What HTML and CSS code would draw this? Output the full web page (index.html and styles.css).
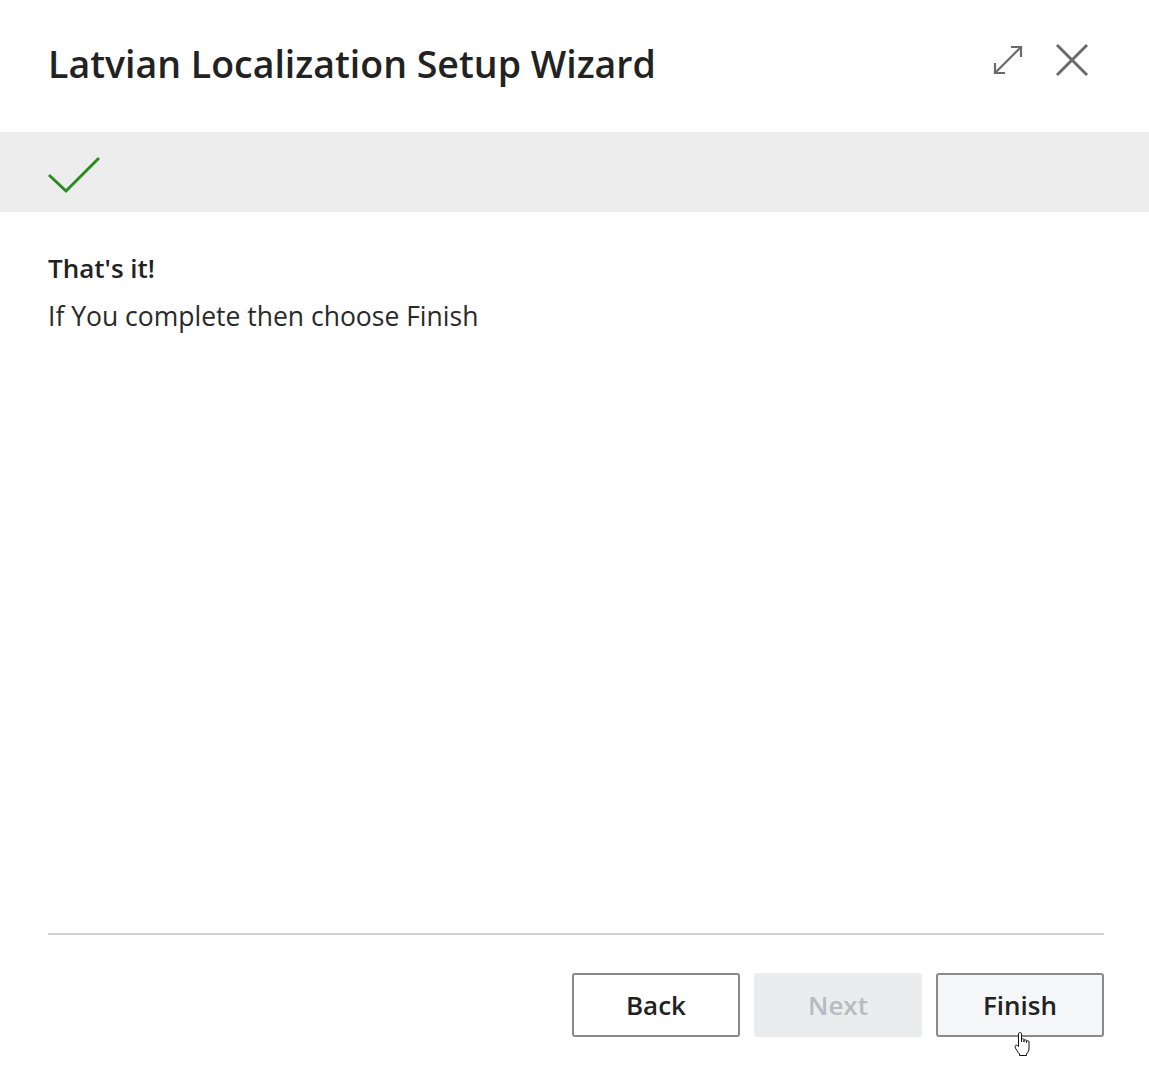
FILE: index.html
```html
<!DOCTYPE html>
<html>
<head>
<meta charset="utf-8">
<link rel="stylesheet" href="styles.css">
</head>
<body>
<div class="dialog">
  <header class="head">
    <h1 class="title">Latvian Localization Setup Wizard</h1>
    <div class="head-actions">
      <svg class="icon-expand" width="30" height="30" viewBox="0 0 30 30">
        <path d="M2 28 L28 2 M18 2 H28 V12 M2 18 V28 H12" fill="none" stroke="#6b6b6b" stroke-width="2.2"/>
      </svg>
      <svg class="icon-close" width="34" height="34" viewBox="0 0 34 34">
        <path d="M2 2 L32 32 M32 2 L2 32" fill="none" stroke="#6b6b6b" stroke-width="3"/>
      </svg>
    </div>
  </header>
  <div class="band">
    <svg class="check" width="52" height="38" viewBox="0 0 52 38">
      <path d="M1 19 L18 35 L51 2" fill="none" stroke="#2b8a1f" stroke-width="3"/>
    </svg>
  </div>
  <main class="content">
    <h2 class="subtitle">That's it!</h2>
    <p class="text">If You complete then choose Finish</p>
  </main>
  <footer class="foot">
    <div class="divider"></div>
    <div class="buttons">
      <button class="btn">Back</button>
      <button class="btn btn-disabled">Next</button>
      <button class="btn btn-hover">Finish
        <svg class="cursor" width="20" height="26" viewBox="0 0 20 26">
          <path d="M6 1.5 C7 1.5 7.5 2 7.5 3 V11 V8.5 C7.5 7.5 10 7.5 10 8.5 V11 V9.5 C10 8.5 12.5 8.5 12.5 9.5 V11.5 V10.5 C12.5 9.5 15 9.5 15 10.5 V17 C15 20 13.5 22 12.5 23 V24.5 H5.5 V23 C4 21.5 1 17 1 15.5 C1 14 2.5 13.5 4.5 15.5 V3 C4.5 2 5 1.5 6 1.5 Z" fill="#fff" stroke="#111" stroke-width="1"/>
        </svg>
      </button>
    </div>
  </footer>
</div>
</body>
</html>
```
FILE: styles.css
```css
* { box-sizing: border-box; }
html, body { margin: 0; padding: 0; background: #fff; }
body {
  font-family: "Open Sans", "Noto Sans", sans-serif;
  color: #212121;
  width: 1149px;
  height: 1082px;
  overflow: hidden;
}
.dialog {
  display: flex;
  flex-direction: column;
  height: 1082px;
}
.head {
  height: 132px;
  display: flex;
  align-items: center;
  justify-content: space-between;
  padding: 0 60px 0 48px;
}
.title {
  margin: 0;
  font-size: 37.5px;
  font-weight: 600;
  color: #222;
  position: relative;
  top: -3px;
}
.head-actions {
  display: flex;
  align-items: center;
  gap: 32px;
  position: relative;
  top: -6px;
}
.band {
  height: 80px;
  background: #ededed;
  display: flex;
  align-items: center;
  padding-left: 48px;
}
.check { display: block; position: relative; top: 3px; }
.content {
  flex: 1;
  padding: 0 48px;
}
.subtitle {
  margin: 38px 0 0;
  font-size: 26px;
  font-weight: 600;
  line-height: 36px;
  color: #222;
}
.text {
  margin: 12px 0 0;
  font-size: 26.5px;
  line-height: 36px;
  color: #2a2a2a;
}
.foot {
  padding: 0 45px 45px 48px;
}
.divider {
  height: 2px;
  background: #cfcfcf;
}
.buttons {
  display: flex;
  justify-content: flex-end;
  gap: 14px;
  margin-top: 38px;
}
.btn {
  position: relative;
  width: 168px;
  height: 64px;
  border: 2px solid #8a8a8a;
  border-radius: 3px;
  background: #fff;
  font-family: inherit;
  font-size: 26px;
  font-weight: 600;
  color: #222;
  padding: 0;
}
.btn-disabled {
  background: #ebecee;
  border-color: #ebecee;
  color: #b7bbc1;
}
.btn-hover { background: #f5f6f8; }
.cursor {
  position: absolute;
  left: 76px;
  top: 56px;
}
```
